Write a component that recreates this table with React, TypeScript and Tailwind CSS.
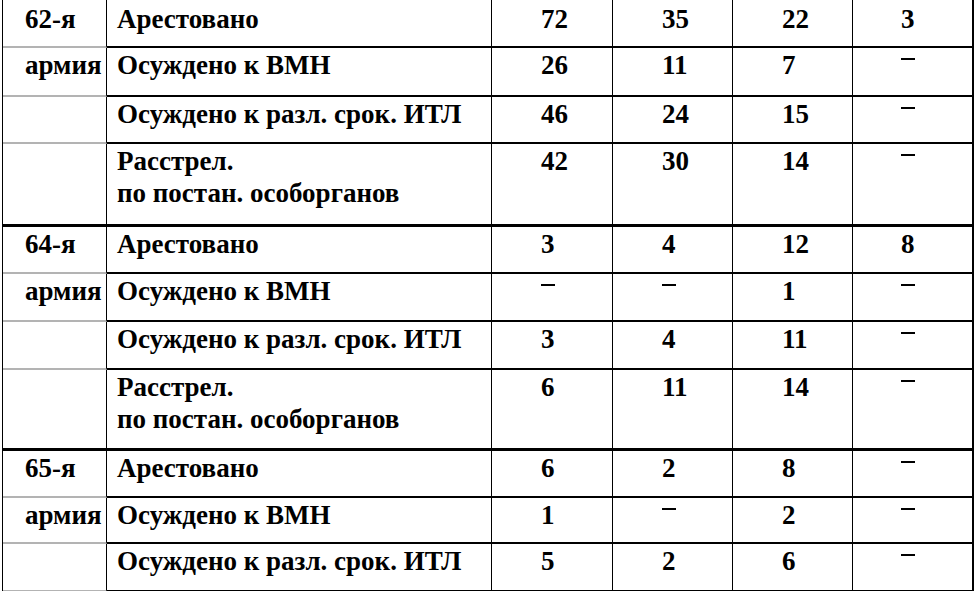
type Row = {
  army: string;
  label: string[];
  vals: (string | null)[];
  h: string;
  last?: boolean;
};

// null = прочерк
const rows: Row[] = [
  { army: '62-я', label: ['Арестовано'], vals: ['72', '35', '22', '3'], h: 'h-[48px]' },
  { army: 'армия', label: ['Осуждено к ВМН'], vals: ['26', '11', '7', null], h: 'h-[49px]' },
  { army: '', label: ['Осуждено к разл. срок. ИТЛ'], vals: ['46', '24', '15', null], h: 'h-[47px]' },
  { army: '', label: ['Расстрел.', 'по постан. особорганов'], vals: ['42', '30', '14', null], h: 'h-[83px]', last: true },
  { army: '64-я', label: ['Арестовано'], vals: ['3', '4', '12', '8'], h: 'h-[47px]' },
  { army: 'армия', label: ['Осуждено к ВМН'], vals: [null, null, '1', null], h: 'h-[48px]' },
  { army: '', label: ['Осуждено к разл. срок. ИТЛ'], vals: ['3', '4', '11', null], h: 'h-[48px]' },
  { army: '', label: ['Расстрел.', 'по постан. особорганов'], vals: ['6', '11', '14', null], h: 'h-[81px]', last: true },
  { army: '65-я', label: ['Арестовано'], vals: ['6', '2', '8', null], h: 'h-[47px]' },
  { army: 'армия', label: ['Осуждено к ВМН'], vals: ['1', null, '2', null], h: 'h-[46px]' },
  { army: '', label: ['Осуждено к разл. срок. ИТЛ'], vals: ['5', '2', '6', null], h: 'h-[48px]' },
];

function Dash() {
  return <div aria-label="–" className="mt-[9px] h-[2px] w-[14px] bg-black" />;
}

export default function App() {
  return (
    <div className="h-[591px] w-[975px] overflow-hidden bg-white font-['Liberation_Serif',serif] text-black">
      <div className="ml-[2px] w-[972px] border-l border-black text-[27px] font-bold leading-[32px]">
        {rows.map((r, i) => {
          const bottom = r.last ? 'border-b-[3px] border-b-black' : 'border-b-2 border-b-black';
          const armyBottom = r.last ? 'border-b-[3px] border-b-black' : 'border-b-2 border-b-[#b3b3b3]';
          const pt = i === 0 ? 'pt-[3px]' : 'pt-[1px]';
          return (
            <div key={i} className={`grid grid-cols-[104px_385px_121px_120px_120px_121px] ${r.h}`}>
              <div className={`border-r border-r-black pl-[22px] ${pt} ${armyBottom}`}>{r.army}</div>
              <div className={`border-r border-r-black pl-[10px] ${pt} ${bottom}`}>
                {r.label.map((l) => (
                  <div key={l}>{l}</div>
                ))}
              </div>
              {r.vals.map((v, j) => (
                <div
                  key={j}
                  className={`${j === 3 ? 'border-r-2 pl-[48px]' : 'border-r pl-[49px]'} border-r-black ${pt} ${bottom}`}
                >
                  {v === null ? <Dash /> : v}
                </div>
              ))}
            </div>
          );
        })}
      </div>
    </div>
  );
}
